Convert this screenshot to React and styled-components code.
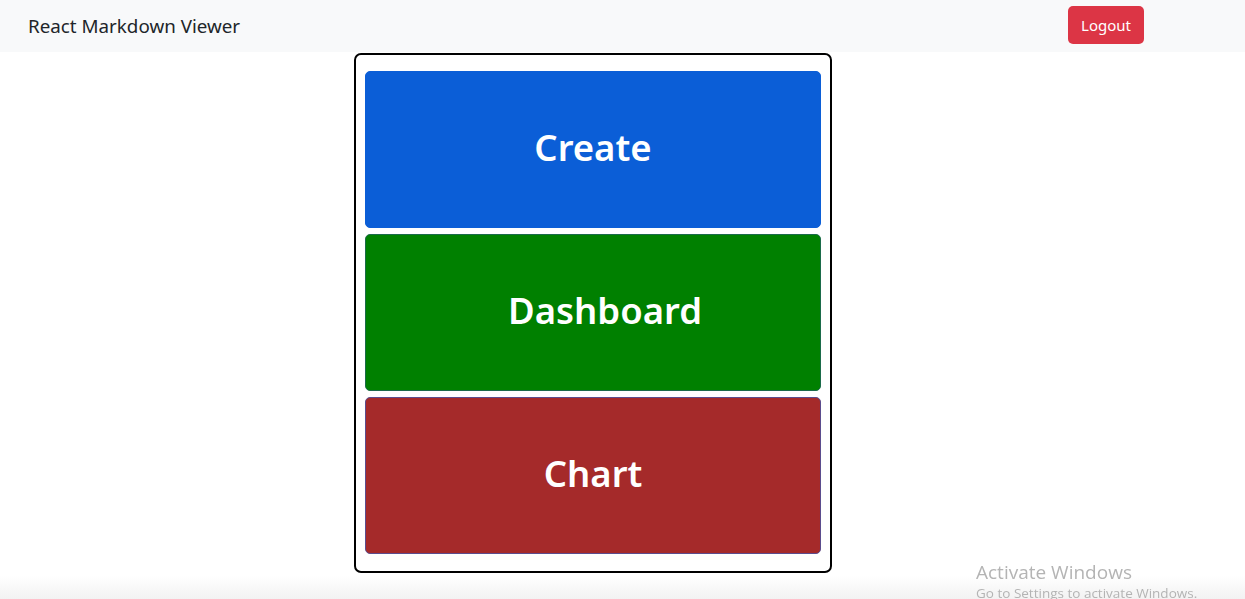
import React from "react";
import styled, { createGlobalStyle } from "styled-components";

const GlobalStyle = createGlobalStyle`
  html, body {
    margin: 0;
    padding: 0;
    background: #ffffff;
    font-family: "Noto Sans", "Open Sans", sans-serif;
  }
`;

const Page = styled.div`
  min-height: 599px;
  display: flex;
  flex-direction: column;
  background: linear-gradient(to bottom, #ffffff 0, #ffffff 576px, #f2f2f2 599px);
`;

const Navbar = styled.nav`
  height: 52px;
  background: #f8f9fa;
  display: flex;
  align-items: center;
  justify-content: space-between;
  padding: 0 101px 0 28px;
`;

const Brand = styled.span`
  font-size: 18.8px;
  color: #212529;
`;

const LogoutButton = styled.button`
  height: 38px;
  width: 76px;
  margin-top: -2px;
  border: none;
  border-radius: 5px;
  background: #dc3545;
  color: #ffffff;
  font-family: inherit;
  font-size: 15px;
  cursor: pointer;
`;

const Main = styled.main`
  padding: 1px 0 0 354px;
`;

const Panel = styled.div`
  width: 456px;
  border: 2px solid #000000;
  border-radius: 7px;
  padding: 16px 9px 17px;
  display: flex;
  flex-direction: column;
  gap: 6px;
  box-sizing: content-box;
`;

const Tile = styled.button`
  height: 157px;
  width: 456px;
  border: 1px solid ${(p) => p.$edge};
  border-radius: 5px;
  background: ${(p) => p.$bg};
  color: #ffffff;
  font-family: inherit;
  font-size: 36.5px;
  font-weight: 600;
  padding: 0 0 6px ${(p) => p.$shift || 0}px;
  cursor: pointer;
`;

const Watermark = styled.div`
  position: fixed;
  left: 976px;
  top: 560px;
  color: #b4b4b4;
  font-family: "Open Sans", sans-serif;
  line-height: 1.3;
  pointer-events: none;
`;

const WatermarkTitle = styled.div`
  font-size: 19px;
`;

const WatermarkSub = styled.div`
  font-size: 13.5px;
`;

const tiles = [
  { label: "Create", bg: "#0b5ed7", edge: "#0b5ed7" },
  { label: "Dashboard", bg: "#008000", edge: "#1b6b4a", shift: 24 },
  { label: "Chart", bg: "#a52a2a", edge: "#5b4d8e" },
];

export default function App() {
  return (
    <Page>
      <GlobalStyle />
      <Navbar>
        <Brand>React Markdown Viewer</Brand>
        <LogoutButton>Logout</LogoutButton>
      </Navbar>
      <Main>
        <Panel>
          {tiles.map((t) => (
            <Tile key={t.label} $bg={t.bg} $edge={t.edge} $shift={t.shift}>
              {t.label}
            </Tile>
          ))}
        </Panel>
      </Main>
      <Watermark>
        <WatermarkTitle>Activate Windows</WatermarkTitle>
        <WatermarkSub>Go to Settings to activate Windows.</WatermarkSub>
      </Watermark>
    </Page>
  );
}
